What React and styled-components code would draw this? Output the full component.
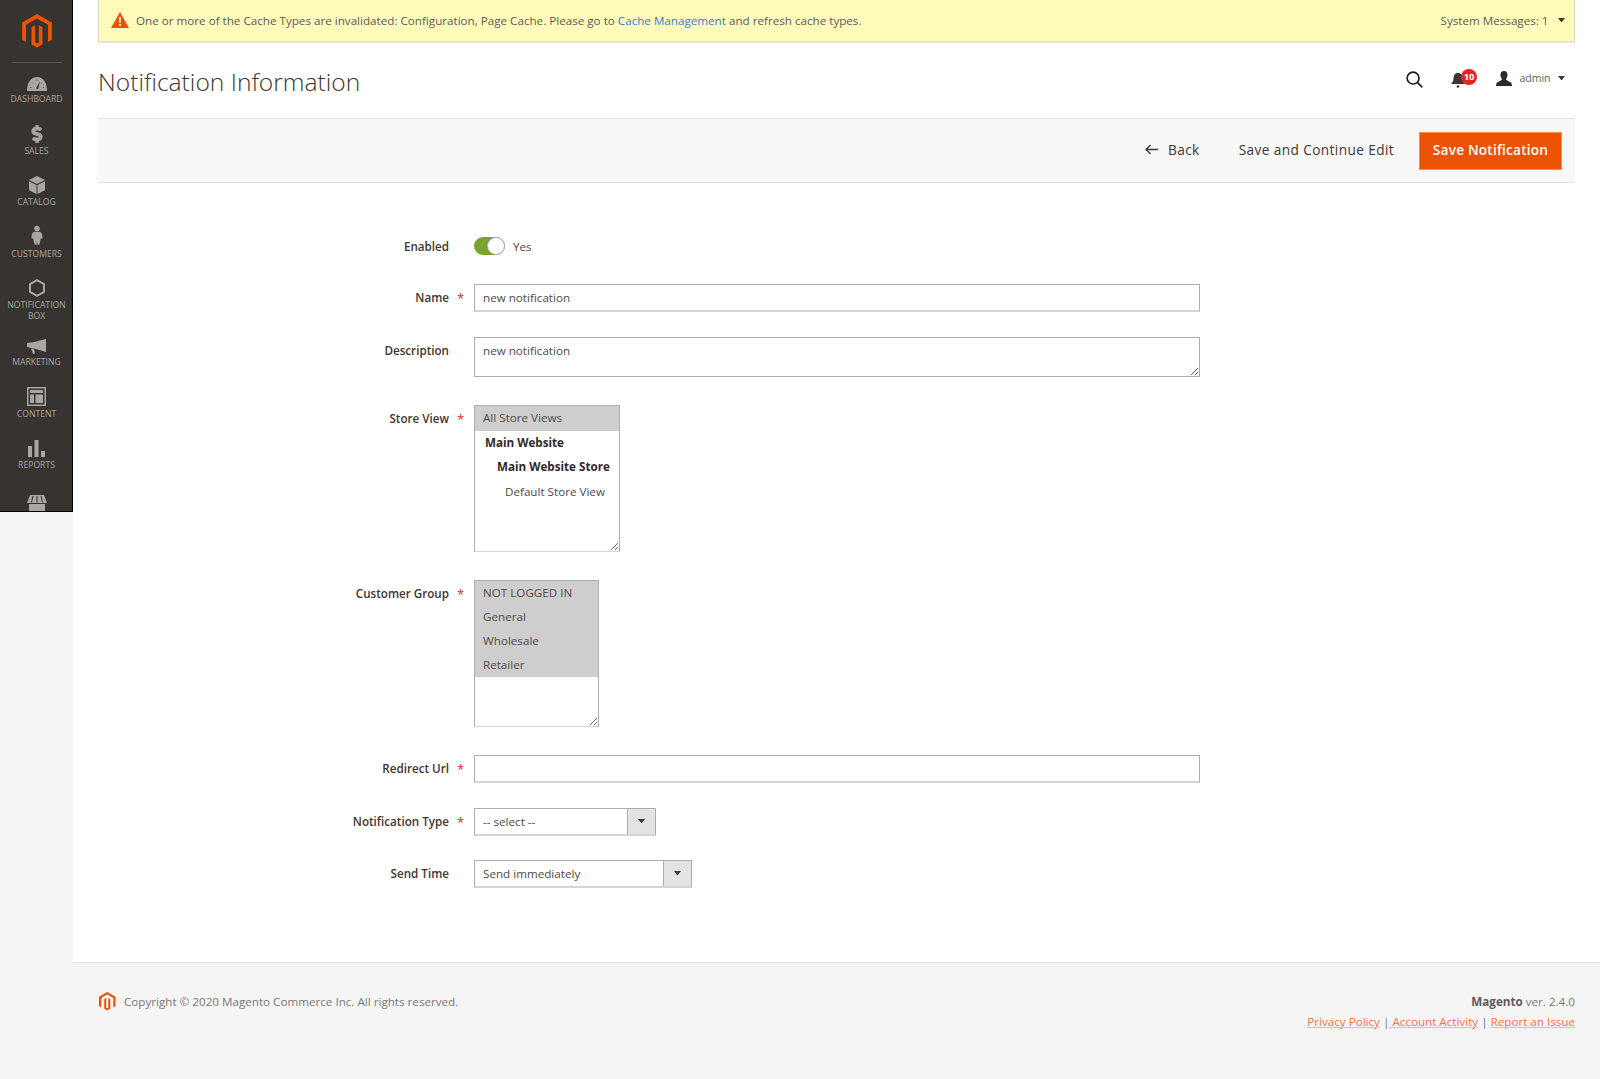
import React from "react";
import styled, { createGlobalStyle } from "styled-components";
import { FaDollarSign } from "react-icons/fa";

const GlobalStyle = createGlobalStyle`
  html, body {
    margin: 0;
    padding: 0;
    background: #fff;
  }
  body {
    font-family: "Open Sans", "Liberation Sans", sans-serif;
    font-size: 11.65px;
    color: #41362f;
  }
  * {
    box-sizing: border-box;
  }
`;

const MagentoLogo = ({ size, color = "#eb5202" }) => (
  <svg width={size} height={size * 1.12} viewBox="0 0 24 27" fill={color}>
    <path d="M12 0 24 6.9v13.7l-3.2 1.9V8.7L12 3.7 3.2 8.7v13.8L0 20.6V6.9z" />
    <path d="M12 27 7.6 24.5V10.6l2.9-1.7v14l1.5.9 1.5-.9v-14l2.9 1.7v13.9z" />
  </svg>
);

const navItems = [
  {
    label: "Dashboard",
    icon: (
      <svg width="20" height="14" viewBox="0 0 20 14" fill="currentColor">
        <path d="M0 14C0 5.500 4 0 10 0s10 5.500 10 14z" />
        <path d="M9 11.500 13 4l-1.800 8.200z" fill="#373330" />
        <path d="M3 10.500h1.200M5 5.500l.8.8M10 2.500v1.200M15 5.500l-.8.8M17 10.500h-1.200" stroke="#373330" strokeWidth=".8" />
      </svg>
    ),
  },
  { label: "Sales", icon: <FaDollarSign size={18} stroke="currentColor" strokeWidth={30} /> },
  {
    label: "Catalog",
    icon: (
      <svg width="16" height="18" viewBox="0 0 17 19" fill="currentColor">
        <path d="M8.500 0 17 4.200 8.500 8.400 0 4.200z" />
        <path d="M0 5.600 8 9.500V19L0 15z" />
        <path d="M17 5.600 9 9.500V19l8-4z" />
      </svg>
    ),
  },
  {
    label: "Customers",
    icon: (
      <svg width="12" height="21" viewBox="0 0 13 21" fill="currentColor">
        <circle cx="6.500" cy="3" r="3" />
        <path d="M3 6.500h7l2 2 .5 5-2 .5-.5 3-1 3.500H7L6.500 17 6 20.500H4l-1-3.500-.5-3-2-.5.500-5z" />
      </svg>
    ),
  },
  {
    label: "Notification Box",
    twoLines: true,
    icon: (
      <svg width="16" height="18" viewBox="0 0 16 18" fill="none" stroke="currentColor" strokeWidth="2">
        <path d="M8 1.200 15 5v8l-7 3.800L1 13V5z" />
      </svg>
    ),
  },
  {
    label: "Marketing",
    icon: (
      <svg width="19" height="15" viewBox="0 0 19 15" fill="currentColor">
        <path d="M19 0v13L7 9.500 5 9.300 0 8V4l6-.8z" />
        <path d="m4 9.500 3 .5 1 4.500-2 .5z" />
      </svg>
    ),
  },
  {
    label: "Content",
    icon: (
      <svg width="19" height="19" viewBox="0 0 19 19" fill="currentColor">
        <path d="M0 0h19v19H0zm1.500 1.500v16h16v-16z" />
        <path d="M3 3h13v3H3zM3 7.500h4V16H3zM8.500 7.500H16V16H8.500z" />
      </svg>
    ),
  },
  {
    label: "Reports",
    icon: (
      <svg width="17" height="17" viewBox="0 0 17 17" fill="currentColor">
        <path d="M0 6h4v11H0zM6.500 0h4v17h-4zM13 11h4v6h-4z" />
      </svg>
    ),
  },
];

const SortArrow = () => (
  <svg width="7" height="4.500" viewBox="0 0 8 5" fill="#41362f">
    <path d="M0 0h8L4 5z" />
  </svg>
);

export default function App() {
  return (
    <Page>
      <GlobalStyle />
      <SideColumn>
        <Sidebar>
          <LogoBox>
            <MagentoLogo size={30} />
          </LogoBox>
          <Nav>
            {navItems.map((item) => (
              <NavItem key={item.label} $twoLines={item.twoLines}>
                <NavIcon>{item.icon}</NavIcon>
                <NavLabel>{item.label}</NavLabel>
              </NavItem>
            ))}
            <StoreIcon>
              <svg width="20" height="16" viewBox="0 0 20 16" fill="currentColor">
                <path d="M3 0h14l3 8H0z" />
                <path d="M2 9h16v7H2z" />
                <path d="M6 1 4.500 7.500M10 1v6.500M14 1l1.500 6.500" stroke="#373330" strokeWidth="1" />
              </svg>
            </StoreIcon>
          </Nav>
        </Sidebar>
      </SideColumn>

      <Main>
        <Content>
          <Notice>
            <NoticeText>
              <svg width="18" height="16" viewBox="0 0 18 16">
                <path d="M9 0 18 16H0z" fill="#eb5202" />
                <path d="M8 5h2l-.3 6H8.300zM8 12h2v2H8z" fill="#fffbbb" />
              </svg>
              <span>
                One or more of the Cache Types are invalidated: Configuration, Page Cache. Please go to{" "}
                <NoticeLink>Cache Management</NoticeLink> and refresh cache types.
              </span>
            </NoticeText>
            <NoticeMeta>
              System Messages: 1
              <SortArrow />
            </NoticeMeta>
          </Notice>

          <Header>
            <Title>Notification Information</Title>
            <HeaderTools>
              <svg width="17" height="17" viewBox="0 0 18 18" fill="none" stroke="#1a1a1a" strokeWidth="1.700">
                <circle cx="7.500" cy="7.500" r="6.300" />
                <path d="m12 12 5.300 5.300" />
              </svg>
              <Bell>
                <svg width="14" height="15" viewBox="0 0 14 15" fill="#41362f">
                  <path d="M7 0c3 0 4.500 2 4.500 5 0 3 1 4.500 2.500 6H0c1.500-1.500 2.500-3 2.500-6C2.500 2 4 0 7 0z" />
                  <circle cx="7" cy="13.500" r="1.300" />
                </svg>
                <Badge>10</Badge>
              </Bell>
              <AdminMenu>
                <svg width="16" height="15" viewBox="0 0 16 15" fill="#2f2a26">
                  <path d="M8 0c2.300 0 3.500 1.600 3.500 4 0 2-1 3.500-1.500 4.300 0 1 2 1.700 4 2.700 1.200.6 2 2 2 4H0c0-2 .8-3.400 2-4 2-1 4-1.700 4-2.700C5.500 7.500 4.500 6 4.500 4 4.500 1.600 5.700 0 8 0z" />
                </svg>
                <AdminName>admin</AdminName>
                <SortArrow />
              </AdminMenu>
            </HeaderTools>
          </Header>

          <Actions>
            <ActionLink $back>
              <svg width="13" height="11" viewBox="0 0 13 11" fill="none" stroke="#41362f" strokeWidth="1.300">
                <path d="M13 5.500H1M5.500 1 1 5.500 5.500 10" />
              </svg>
              <span>Back</span>
            </ActionLink>
            <ActionLink>Save and Continue Edit</ActionLink>
            <PrimaryButton>Save Notification</PrimaryButton>
          </Actions>

          <Form>
            <Row $tall>
              <Label $flush>Enabled</Label>
              <span />
              <ToggleWrap>
                <Toggle>
                  <Knob />
                </Toggle>
                <ToggleText>Yes</ToggleText>
              </ToggleWrap>
            </Row>
            <Row>
              <Label>Name</Label>
              <Star>*</Star>
              <TextInput defaultValue="new notification" />
            </Row>
            <Row $tall>
              <Label>Description</Label>
              <span />
              <TextArea defaultValue="new notification" />
            </Row>
            <Row $tall>
              <Label>Store View</Label>
              <Star>*</Star>
              <ListBox $width={146}>
                <ListOption $selected>All Store Views</ListOption>
                <ListOption $bold $indent={10}>Main Website</ListOption>
                <ListOption $bold $indent={22}>Main Website Store</ListOption>
                <ListOption $indent={30}>Default Store View</ListOption>
              </ListBox>
            </Row>
            <Row $tall>
              <Label>Customer Group</Label>
              <Star>*</Star>
              <ListBox $width={125}>
                <ListOption $selected $dense>NOT LOGGED IN</ListOption>
                <ListOption $selected $dense>General</ListOption>
                <ListOption $selected $dense>Wholesale</ListOption>
                <ListOption $selected $dense>Retailer</ListOption>
              </ListBox>
            </Row>
            <Row>
              <Label>Redirect Url</Label>
              <Star>*</Star>
              <TextInput />
            </Row>
            <Row>
              <Label>Notification Type</Label>
              <Star>*</Star>
              <SelectBox $width={182}>
                <SelectValue>-- select --</SelectValue>
                <SelectArrow>
                  <SortArrow />
                </SelectArrow>
              </SelectBox>
            </Row>
            <Row>
              <Label>Send Time</Label>
              <span />
              <SelectBox $width={218}>
                <SelectValue>Send immediately</SelectValue>
                <SelectArrow>
                  <SortArrow />
                </SelectArrow>
              </SelectBox>
            </Row>
          </Form>
        </Content>

        <Footer>
          <Copyright>
            <MagentoLogo size={16.500} />
            <span>Copyright © 2020 Magento Commerce Inc. All rights reserved.</span>
          </Copyright>
          <FooterRight>
            <div>
              <strong>Magento</strong> ver. 2.4.0
            </div>
            <FooterLinks>
              <FooterLink>Privacy Policy</FooterLink> |<FooterLink>&nbsp;Account Activity</FooterLink> |{" "}
              <FooterLink>Report an Issue</FooterLink>
            </FooterLinks>
          </FooterRight>
        </Footer>
      </Main>
    </Page>
  );
}

const Page = styled.div`
  display: flex;
  width: 1600px;
  height: 1079px;
  overflow: hidden;
`;

const SideColumn = styled.div`
  width: 73px;
  flex-shrink: 0;
  background: #f5f5f5;
`;

const Sidebar = styled.aside`
  height: 512px;
  background: #373330;
  border-right: 1px solid #000;
  border-bottom: 1px solid #000;
  overflow: hidden;
`;

const LogoBox = styled.div`
  height: 63px;
  margin: 0 10px 0 12px;
  padding-top: 14px;
  display: flex;
  justify-content: center;
  border-bottom: 1px solid #5a5653;
`;

const Nav = styled.nav`
  display: flex;
  flex-direction: column;
  align-items: center;
  color: #aaa6a0;
  padding: 6px 0 0 1px;
`;

const NavItem = styled.div`
  width: 100%;
  display: flex;
  flex-direction: column;
  align-items: center;
  margin-bottom: ${(p) => (p.$twoLines ? "10px" : "15.500px")};
`;

const NavIcon = styled.div`
  height: 22px;
  display: flex;
  align-items: flex-end;
  justify-content: center;
`;

const NavLabel = styled.div`
  margin-top: 3px;
  font-size: 8.650px;
  line-height: 11px;
  text-align: center;
  text-transform: uppercase;
  padding: 0 8px;
`;

const StoreIcon = styled.div`
  margin-top: 8px;
  display: flex;
  justify-content: center;
`;

const Main = styled.div`
  flex: 1;
  display: flex;
  flex-direction: column;
`;

const Content = styled.div`
  flex: 1;
  padding: 0 25px;
  background: #fff;
`;

const Notice = styled.div`
  height: 43px;
  display: flex;
  align-items: center;
  justify-content: space-between;
  padding: 0 9.500px 1px 12px;
  background: #fffbbb;
  border-left: 1px solid #d9d9c0;
  border-right: 1px solid #d9d9c0;
  border-bottom: 2px solid #e3e3e3;
  color: #5c5c5c;
`;

const NoticeText = styled.div`
  display: flex;
  align-items: center;
  gap: 7px;
`;

const NoticeLink = styled.a`
  color: #2f7fd6;
`;

const NoticeMeta = styled.div`
  display: flex;
  align-items: center;
  gap: 9px;
`;

const Header = styled.div`
  height: 75px;
  display: flex;
  align-items: center;
  justify-content: space-between;
`;

const Title = styled.h1`
  margin: 0;
  padding-top: 2px;
  font-size: 24.600px;
  font-weight: 300;
  color: #41362f;
`;

const HeaderTools = styled.div`
  display: flex;
  align-items: center;
  padding: 0 10.500px 3px 0;
`;

const Bell = styled.div`
  position: relative;
  display: flex;
  margin: 2px 31px 0 28px;
`;

const Badge = styled.span`
  position: absolute;
  left: 9.700px;
  top: -4px;
  width: 16px;
  height: 16px;
  border-radius: 50%;
  background: #e22626;
  color: #fff;
  font-size: 9.500px;
  font-weight: 700;
  line-height: 16px;
  text-align: center;
`;

const AdminMenu = styled.div`
  display: flex;
  align-items: center;
  gap: 7px;
  margin-bottom: 2px;
`;

const AdminName = styled.span`
  font-size: 10.500px;
  color: #676056;
`;

const Actions = styled.div`
  height: 65px;
  display: flex;
  align-items: center;
  justify-content: flex-end;
  gap: 25px;
  padding-right: 13px;
  background: #f8f8f8;
  border-top: 1px solid #e3e3e3;
  border-bottom: 1px solid #e3e3e3;
`;

const ActionLink = styled.button`
  display: flex;
  align-items: center;
  gap: 10px;
  padding: 0 ${(p) => (p.$back ? "14px" : "0")} 2px 0;
  border: none;
  background: none;
  font-family: inherit;
  font-size: 13.650px;
  letter-spacing: 0.4px;
  color: #41362f;
`;

const PrimaryButton = styled.button`
  width: 143px;
  height: 38px;
  padding: 0 0 2px;
  border: 1px solid #f58a52;
  background: #eb5202;
  color: #fff;
  font-family: inherit;
  font-size: 13.650px;
  font-weight: 600;
  letter-spacing: 0.2px;
`;

const Form = styled.form`
  display: flex;
  flex-direction: column;
  gap: 24.500px;
  padding-top: 53.500px;
`;

const Row = styled.div`
  display: grid;
  grid-template-columns: 351px 25px 1fr;
  align-items: start;
  padding-bottom: ${(p) => (p.$tall ? "4px" : "0")};
`;

const Label = styled.label`
  padding-top: ${(p) => (p.$flush ? "1px" : "5px")};
  text-align: right;
  font-weight: 600;
  font-size: 11.650px;
  line-height: 18px;
  color: #41362f;
`;

const Star = styled.span`
  padding-top: 5px;
  padding-left: 8px;
  color: #e22626;
  font-size: 13px;
  line-height: 18px;
`;

const ToggleWrap = styled.div`
  height: 19px;
  display: flex;
  align-items: center;
  gap: 8px;
`;

const Toggle = styled.div`
  width: 31px;
  height: 18px;
  display: flex;
  justify-content: flex-end;
  border-radius: 9px;
  background: #79a22e;
`;

const Knob = styled.div`
  width: 18px;
  height: 18px;
  border-radius: 50%;
  background: #fff;
  border: 1px solid #adadad;
`;

const ToggleText = styled.span`
  color: #514943;
`;

const TextInput = styled.input`
  width: 726px;
  height: 28px;
  padding: 0 8px;
  border: 1px solid #adadad;
  border-bottom-width: 2px;
  border-bottom-color: #d5d5d5;
  font-family: inherit;
  font-size: 11.650px;
  color: #514943;
  outline: none;
`;

const TextArea = styled.textarea`
  display: block;
  width: 726px;
  height: 40px;
  padding: 4px 8px;
  border: 1px solid #adadad;
  font-family: inherit;
  font-size: 11.650px;
  line-height: 18px;
  color: #514943;
  outline: none;
  resize: vertical;
`;

const ListBox = styled.div`
  width: ${(p) => p.$width}px;
  height: 146.500px;
  border: 1px solid #adadad;
  border-bottom-color: #d5d5d5;
  overflow: auto;
  resize: vertical;
`;

const ListOption = styled.div`
  height: ${(p) => (p.$dense ? "24px" : "24.700px")};
  line-height: ${(p) => (p.$dense ? "24px" : "24.700px")};
  padding-left: ${(p) => p.$indent || 8}px;
  white-space: nowrap;
  background: ${(p) => (p.$selected ? "#cecece" : "transparent")};
  font-weight: ${(p) => (p.$bold ? 700 : 400)};
  color: ${(p) => (p.$bold ? "#2f2a26" : "#514943")};
`;

const SelectBox = styled.div`
  width: ${(p) => p.$width}px;
  height: 28px;
  display: flex;
  border: 1px solid #adadad;
  border-bottom-color: #d5d5d5;
  border-bottom-width: 2px;
`;

const SelectValue = styled.div`
  flex: 1;
  padding-left: 8px;
  line-height: 26px;
  color: #514943;
`;

const SelectArrow = styled.div`
  width: 28px;
  display: flex;
  align-items: center;
  justify-content: center;
  background: #e3e3e3;
  border-left: 1px solid #adadad;
`;

const Footer = styled.footer`
  height: 117px;
  display: flex;
  justify-content: space-between;
  padding: 29px 25px 0;
  background: #f5f5f5;
  border-top: 1px solid #e3e3e3;
  color: #787878;
`;

const Copyright = styled.div`
  display: flex;
  align-items: flex-start;
  gap: 8.500px;
  padding-left: 1px;
  line-height: 20px;
`;

const FooterRight = styled.div`
  text-align: right;
  line-height: 20px;

  strong {
    color: #5f5b57;
  }
`;

const FooterLinks = styled.div`
  color: #5c7a94;
`;

const FooterLink = styled.a`
  color: #f2714a;
  text-decoration: underline;
  text-decoration-color: #f7b5a0;
`;
